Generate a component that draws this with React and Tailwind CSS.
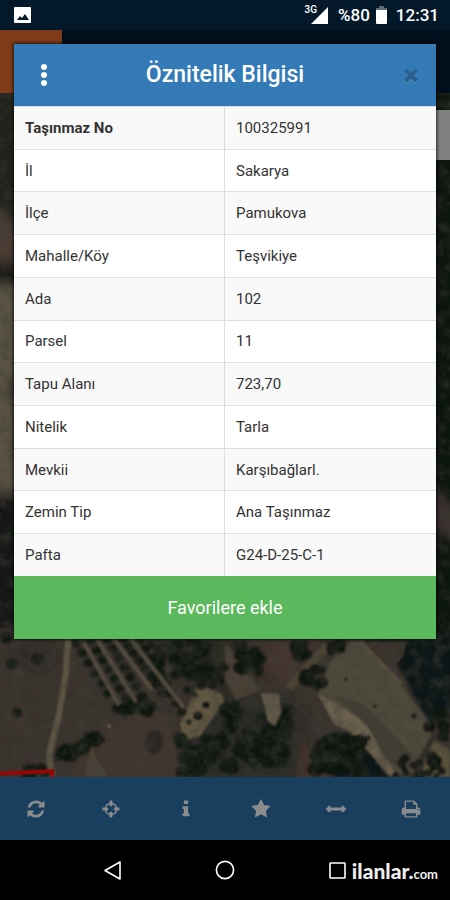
import React from "react";

// 1792 x 1792 icon grid
const ICONS = {
  refresh: "M1639 1056q0 5-1 7-64 268-268 434.5t-478 166.5q-146 0-282.5-55t-243.5-157l-129 129q-19 19-45 19t-45-19-19-45v-448q0-26 19-45t45-19h448q26 0 45 19t19 45-19 45l-137 137q71 66 161 102t187 36q134 0 250-65t186-179q11-17 53-117 8-23 30-23h192q13 0 22.5 9.5t9.5 22.5zm25-800v448q0 26-19 45t-45 19h-448q-26 0-45-19t-19-45 19-45l138-138q-148-137-349-137-134 0-250 65t-186 179q-11 17-53 117-8 23-30 23h-199q-13 0-22.5-9.5t-9.5-22.5v-7q65-268 270-434.5t480-166.5q146 0 284 55.5t245 156.5l130-129q19-19 45-19t45 19 19 45z",
  crosshairs: "M1325 1024h-109q-26 0-45-19t-19-45v-128q0-26 19-45t45-19h109q-32-108-112.5-188.5t-188.5-112.5v109q0 26-19 45t-45 19h-128q-26 0-45-19t-19-45v-109q-108 32-188.5 112.5t-112.5 188.5h109q26 0 45 19t19 45v128q0 26-19 45t-45 19h-109q32 108 112.5 188.5t188.5 112.5v-109q0-26 19-45t45-19h128q26 0 45 19t19 45v109q108-32 188.5-112.5t112.5-188.5zm339-192v128q0 26-19 45t-45 19h-143q-37 161-154.5 278.5t-278.5 154.5v143q0 26-19 45t-45 19h-128q-26 0-45-19t-19-45v-143q-161-37-278.5-154.5t-154.5-278.5h-143q-26 0-45-19t-19-45v-128q0-26 19-45t45-19h143q37-161 154.5-278.5t278.5-154.5v-143q0-26 19-45t45-19h128q26 0 45 19t19 45v143q161 37 278.5 154.5t154.5 278.5h143q26 0 45 19t19 45z",
  info: "M1216 1344v128q0 26-19 45t-45 19h-512q-26 0-45-19t-19-45v-128q0-26 19-45t45-19h64v-384h-64q-26 0-45-19t-19-45v-128q0-26 19-45t45-19h384q26 0 45 19t19 45v576h64q26 0 45 19t19 45zm-128-1152v192q0 26-19 45t-45 19h-256q-26 0-45-19t-19-45v-192q0-26 19-45t45-19h256q26 0 45 19t19 45z",
  star: "M1728 647q0 22-26 48l-363 354 86 500q1 7 1 20 0 21-10.5 35.5t-30.5 14.5q-19 0-40-12l-449-236-449 236q-22 12-40 12-21 0-31.5-14.5t-10.5-35.5q0-6 2-20l86-500-364-354q-25-27-25-48 0-37 56-46l502-73 225-455q19-41 49-41t49 41l225 455 502 73q56 9 56 46z",
  arrows: "M1792 896q0 26-19 45l-256 256q-19 19-45 19t-45-19-19-45v-128h-1024v128q0 26-19 45t-45 19-45-19l-256-256q-19-19-19-45t19-45l256-256q19-19 45-19t45 19 19 45v128h1024v-128q0-26 19-45t45-19 45 19l256 256q19 19 19 45z",
  print: "M448 1536h896v-256h-896v256zm0-640h896v-384h-160q-40 0-68-28t-28-68v-160h-640v640zm1152 64q0-26-19-45t-45-19-45 19-19 45 19 45 45 19 45-19 19-45zm128 0v416q0 13-9.5 22.5t-22.5 9.5h-224v160q0 40-28 68t-68 28h-960q-40 0-68-28t-28-68v-160h-224q-13 0-22.5-9.5t-9.5-22.5v-416q0-79 56.5-135.5t135.5-56.5h64v-544q0-40 28-68t68-28h672q40 0 88 20t76 48l152 152q28 28 48 76t20 88v256h64q79 0 135.5 56.5t56.5 135.5z",
  times: "M1490 1322q0 40-28 68l-136 136q-28 28-68 28t-68-28l-294-294-294 294q-28 28-68 28t-68-28l-136-136q-28-28-28-68t28-68l294-294-294-294q-28-28-28-68t28-68l136-136q28-28 68-28t68 28l294 294 294-294q28-28 68-28t68 28l136 136q28 28 28 68t-28 68l-294 294 294 294q28 28 28 68z",
};

const TOOLS = [
  { icon: "refresh", label: "Yenile" },
  { icon: "crosshairs", label: "Konum" },
  { icon: "info", label: "Bilgi" },
  { icon: "star", label: "Favoriler" },
  { icon: "arrows", label: "Ölçüm" },
  { icon: "print", label: "Yazdır" },
];

const ROWS = [
  ["Taşınmaz No", "100325991"],
  ["İl", "Sakarya"],
  ["İlçe", "Pamukova"],
  ["Mahalle/Köy", "Teşvikiye"],
  ["Ada", "102"],
  ["Parsel", "11"],
  ["Tapu Alanı", "723,70"],
  ["Nitelik", "Tarla"],
  ["Mevkii", "Karşıbağlarl."],
  ["Zemin Tip", "Ana Taşınmaz"],
  ["Pafta", "G24-D-25-C-1"],
];

function Icon({ name, className }) {
  return (
    <svg viewBox="0 0 1792 1792" fill="currentColor" className={className} aria-hidden="true">
      <path d={ICONS[name]} />
    </svg>
  );
}

// small repeatable generator so the trees always land in the same place
function makeRandom(seed) {
  let s = seed * 7919;
  return () => {
    s = (s * 16807) % 2147483647;
    return s / 2147483647;
  };
}

function scatter(seed, count, x, y, w, h, size) {
  const rnd = makeRandom(seed);
  const out = [];
  for (let i = 0; i < count; i++) {
    out.push({ x: x + rnd() * w, y: y + rnd() * h, r: size * (0.6 + rnd() * 0.6) });
  }
  return out;
}

function orchardRow(x1, y1, x2, y2, count) {
  const out = [];
  for (let i = 0; i < count; i++) {
    const t = i / (count - 1);
    out.push({ x: x1 + (x2 - x1) * t, y: y1 + (y2 - y1) * t, r: 5 });
  }
  return out;
}

const TREES = [
  ...orchardRow(76, 643, 108, 693, 6),
  ...orchardRow(91, 641, 126, 698, 7),
  ...orchardRow(107, 639, 142, 696, 7),
  ...orchardRow(122, 638, 162, 692, 8),
  ...orchardRow(139, 640, 182, 712, 9),
  ...scatter(23, 34, 150, 640, 60, 38, 6),
  ...scatter(91, 18, 190, 662, 36, 26, 6),
  ...scatter(37, 16, 235, 645, 24, 26, 6),
  ...scatter(55, 52, 222, 702, 66, 64, 7),
  ...scatter(19, 34, 180, 738, 52, 38, 7),
  ...scatter(77, 12, 303, 667, 20, 20, 6),
  ...scatter(62, 6, 330, 642, 12, 10, 6),
  ...scatter(66, 6, 297, 642, 10, 14, 7),
  ...scatter(88, 34, 315, 738, 46, 34, 8),
  ...scatter(43, 24, 394, 754, 52, 22, 5),
  ...scatter(14, 12, 426, 712, 24, 30, 6),
  ...scatter(33, 18, 116, 702, 36, 10, 6),
  ...scatter(71, 14, 56, 748, 28, 10, 6),
  ...scatter(72, 12, 80, 732, 20, 12, 6),
  ...scatter(83, 8, 24, 768, 24, 8, 5),
  { x: 6, y: 638, r: 6 },
  { x: 38, y: 659, r: 6 },
  { x: 12, y: 664, r: 6 },
  { x: 17, y: 713, r: 5 },
  { x: 188, y: 690, r: 4 },
  { x: 195, y: 695, r: 3 },
  { x: 206, y: 705, r: 4 },
  { x: 198, y: 716, r: 5 },
  { x: 189, y: 722, r: 3 },
  { x: 375, y: 706, r: 2 },
  { x: 346, y: 679, r: 2 },
  { x: 414, y: 716, r: 3 },
  { x: 368, y: 738, r: 3 },
];

const SHADE = scatter(29, 120, 14, 90, 412, 690, 16);

function AerialMap() {
  return (
    <svg
      viewBox="0 30 450 747"
      preserveAspectRatio="xMidYMax slice"
      className="absolute inset-0 h-full w-full"
      aria-hidden="true"
    >
      <defs>
        <filter id="soft" x="-5%" y="-5%" width="110%" height="110%">
          <feGaussianBlur stdDeviation="1" />
        </filter>
        <filter id="wide" x="-5%" y="-5%" width="110%" height="110%">
          <feGaussianBlur stdDeviation="4" />
        </filter>
        <filter id="ground" x="0" y="0" width="100%" height="100%">
          <feTurbulence type="fractalNoise" baseFrequency="0.09" numOctaves="3" seed="4" />
          <feColorMatrix values="0 0 0 0 0.05  0 0 0 0 0.05  0 0 0 0 0.04  0 0 0 2.4 -0.95" />
        </filter>
      </defs>
      <rect x="-50" y="30" width="550" height="760" fill="#3a332d" />
      <g filter="url(#wide)">
        <path d="M-10 90H20V225L-10 200z" fill="#23211d" />
        <path d="M-10 200L20 235V265L-10 252z" fill="#4b3d34" />
        <path d="M-10 262L20 265V285H-10z" fill="#1d1e19" />
        <path d="M-10 285H40V490H-10z" fill="#5a5344" />
        <path d="M-10 500H25V628H-10z" fill="#121814" />
        <path d="M425 90H460V640H425z" fill="#0c1210" />
        <path d="M434 488L460 512V545L434 528z" fill="#3a332e" />
        {SHADE.map((t, i) => (
          <circle key={i} cx={t.x} cy={t.y} r={t.r} fill={i % 2 ? "#3f3730" : "#24211d"} opacity="0.3" />
        ))}
        <path d="M150 640H240V720L190 690z" fill="#2b2923" />
        <path d="M222 695H296V777H180L190 735z" fill="#2b2c25" />
        <path d="M268 640H320L290 685L262 670z" fill="#44342e" />
      </g>
      <g filter="url(#soft)">
        <path d="M110 730Q150 700 168 716L180 777H70Q88 740 110 730z" fill="#41362f" />
        <ellipse cx="154" cy="742" rx="9" ry="12" fill="#292621" />
        <path d="M92 748Q84 770 86 777H108Q96 760 92 748z" fill="#4b4337" />
        <path d="M68 640L66 672L59 715L49 755L52 777" fill="none" stroke="#5f5645" strokeWidth="6" />
        <path d="M72 662L93 700" stroke="#454034" strokeWidth="1" />
        <path d="M198 685L222 694L224 702L200 736L184 740L180 724z" fill="#645942" />
        <path d="M324 643L331 648L292 690L285 686z" fill="#4e4536" />
        <path d="M225 642L260 690L236 700L225 680z" fill="#4a4035" />
        <path d="M352 641H360L398 680L428 722L432 738L412 772L388 777L358 738L318 696L330 662z" fill="#4e483a" />
        <path d="M318 694L340 706L365 722L392 768L398 777L386 774L350 731L334 724z" fill="#6a604d" />
        <path d="M334 695L364 704L390 731L414 756L404 772L384 757L368 727z" fill="#403e32" />
        <path d="M360 641H404L397 665L430 724L460 700V630z" fill="#101713" />
        <path d="M392 641H407L403 656L394 668z" fill="#39302b" />
        <path d="M360 641L402 684" stroke="#5a513f" strokeWidth="3" />
        <path d="M318 742Q330 728 352 734L372 755L390 777H335L314 756z" fill="#111713" />
        <path d="M304 740L320 770L332 777H296z" fill="#3f302a" />
        <path d="M420 777L434 741L450 750V777z" fill="#5a523e" />
        <path d="M434 735L419 762" stroke="#302c24" strokeWidth="5" />
        {TREES.map((t, i) => (
          <ellipse key={i} cx={t.x} cy={t.y} rx={t.r} ry={t.r * 0.9} fill={i % 3 ? "#11130f" : "#151c17"} opacity="0.92" />
        ))}
        <path d="M261 693L279 694L281 712L275 726L268 721z" fill="#625a49" />
        <g fill="none" stroke="#5c5243" strokeWidth="3">
          <path d="M84 643L119 705" />
          <path d="M98 641L136 702" />
          <path d="M114 639L152 690" />
          <path d="M130 638L184 708" />
        </g>
        <circle cx="109" cy="726" r="2" fill="#756351" />
      </g>
      <rect x="0" y="90" width="450" height="690" filter="url(#ground)" opacity="0.45" />
      <path d="M-50 776L52 771V778" fill="none" stroke="#950606" strokeWidth="4" />
    </svg>
  );
}

function StatusBar() {
  return (
    <header className="flex h-[30px] items-center justify-between bg-[#031929] pr-[11px] pl-[14px] text-white">
      <svg viewBox="0 0 17 16" className="h-4 w-[17px]" aria-label="Resim">
        <rect width="17" height="16" rx="1" fill="#fff" />
        <path d="M3 13L6 9L8 11L11 7L15 13z" fill="#031929" />
      </svg>
      <div className="flex items-center text-[17px] leading-8 font-medium">
        <span className="-mr-1.5 self-start pt-[5px] text-[10px] leading-[12px]">3G</span>
        <svg viewBox="0 0 17 17" className="mr-[10px] h-[17px] w-[17px]" aria-hidden="true">
          <path d="M17 0V17H0z" fill="#fff" />
        </svg>
        <span>%80</span>
        <svg viewBox="0 0 11 18" className="mr-[9px] ml-[6px] h-[18px] w-[11px]" aria-hidden="true">
          <path d="M3 0H8V2H11V5H0V2H3z" fill="#5d6b75" />
          <path d="M0 4H11V17Q11 18 10 18H1Q0 18 0 17z" fill="#fff" />
        </svg>
        <span>12:31</span>
      </div>
    </header>
  );
}

function InfoDialog() {
  return (
    <section
      role="dialog"
      aria-labelledby="dialog-title"
      className="relative mx-[14px] mt-[14px] shadow-[0_0_3px_1px_rgba(0,0,0,0.7)]"
    >
      <div className="flex h-[62px] items-center bg-[#337ab7] text-white">
        <button type="button" aria-label="Menü" className="flex w-[60px] justify-center">
          <svg viewBox="0 0 6 22" fill="currentColor" className="h-[22px] w-[6px]">
            <circle cx="3" cy="3" r="3" />
            <circle cx="3" cy="11" r="3" />
            <circle cx="3" cy="19" r="3" />
          </svg>
        </button>
        <h1 id="dialog-title" className="flex-1 text-center text-[23px] leading-8 font-medium">Öznitelik Bilgisi</h1>
        <button type="button" aria-label="Kapat" className="flex w-[60px] justify-end pr-[15px] text-[#29628f]">
          <Icon name="times" className="h-5 w-5 drop-shadow-[0_1px_0_#5b91bd]" />
        </button>
      </div>
      <table className="h-[470px] w-full table-fixed border-separate border-spacing-0 bg-white text-left text-[15px] leading-5 text-[#333]">
        <tbody>
          {ROWS.map(([name, value], i) => (
            <tr key={name} className="odd:bg-[#f9f9f9]">
              <th
                scope="row"
                className={i === 0 ? "border-t border-r border-[#ddd] px-[11px] font-bold" : "border-t border-r border-[#ddd] px-[11px] font-normal"}
              >
                {name}
              </th>
              <td className="border-t border-[#ddd] px-[11px]">{value}</td>
            </tr>
          ))}
        </tbody>
      </table>
      <button type="button" className="block h-[63px] w-full bg-[#5cb85c] text-[18px] leading-6 text-white">
        Favorilere ekle
      </button>
    </section>
  );
}

function Toolbar() {
  return (
    <nav className="grid h-[63px] grid-cols-6 bg-[#1a3e5d] text-[#8a8c8e]">
      {TOOLS.map((tool) => (
        <button key={tool.label} type="button" aria-label={tool.label} className="flex items-center justify-center pr-[3px]">
          <Icon name={tool.icon} className="h-5 w-5" />
        </button>
      ))}
    </nav>
  );
}

function SystemNav() {
  return (
    <footer className="grid h-[60px] grid-cols-4 items-center bg-black text-white">
      <button type="button" aria-label="Geri" className="col-span-2 ml-[104px] w-[17px]">
        <svg viewBox="0 0 17 19" className="h-[19px] w-[17px]" fill="none" stroke="currentColor" strokeWidth="1.6" strokeLinejoin="round">
          <path d="M16 1V18L1 9.500z" />
        </svg>
      </button>
      <button type="button" aria-label="Ana ekran" className="-ml-[10px] w-5">
        <svg viewBox="0 0 20 20" className="h-5 w-5" fill="none" stroke="currentColor" strokeWidth="1.6">
          <circle cx="10" cy="10" r="8.600" />
        </svg>
      </button>
      <div className="flex items-center justify-end gap-[6px] pr-3">
        <button type="button" aria-label="Son uygulamalar" className="w-[17px]">
          <svg viewBox="0 0 17 17" className="h-[17px] w-[17px]" fill="none" stroke="currentColor" strokeWidth="1.6">
            <rect x="1" y="1" width="15" height="15" rx="0.500" />
          </svg>
        </button>
        <span className="pt-1 font-['Lato',sans-serif] text-[21px] leading-6 font-black whitespace-nowrap text-[#eee]">
          ilanlar.<span className="text-[13px] font-bold">com</span>
        </span>
      </div>
    </footer>
  );
}

export default function App() {
  return (
    <div className="flex min-h-screen flex-col bg-black font-['Roboto',sans-serif]">
      <StatusBar />
      <main className="relative flex-1 overflow-hidden">
        <AerialMap />
        <div className="absolute inset-x-0 top-0 h-[63px] bg-[#000f1c]">
          <div className="h-full w-[62px] bg-[#7e3b17]" />
        </div>
        <div className="absolute top-20 right-0 h-[50px] w-[14px] bg-[#808080]" />
        <InfoDialog />
      </main>
      <Toolbar />
      <SystemNav />
    </div>
  );
}
